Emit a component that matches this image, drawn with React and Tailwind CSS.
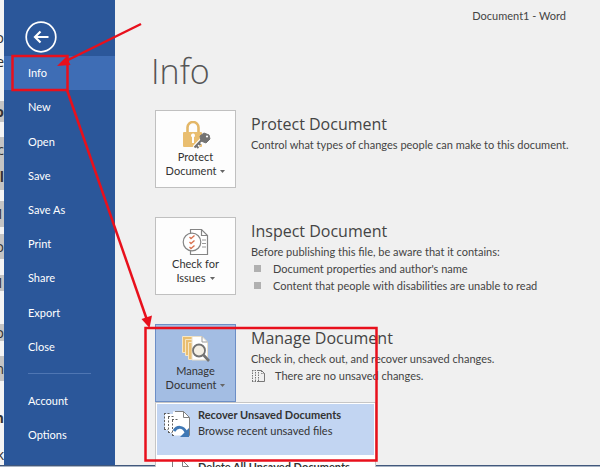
const ui = "font-['Open_Sans','Noto_Sans',sans-serif]";
const body = "font-['Lato','Open_Sans',sans-serif]";

const navItems = ["Info", "New", "Open", "Save", "Save As", "Print", "Share", "Export", "Close"];

const pageLines = [
  { h: "h-[26px]", text: "" },
  { h: "h-[24px]", text: "o" },
  { h: "h-[24px]", text: "e" },
  { h: "h-[27px]", text: "" },
  { h: "h-[21px]", text: "o", bold: true, marked: true },
  { h: "h-[15px]", text: "" },
  { h: "h-[26px]", text: "c", marked: true },
  { h: "h-[27px]", text: "l", bold: true, marked: true },
  { h: "h-[11px]", text: "" },
  { h: "h-[26px]", text: "1", marked: true },
  { h: "h-[7px]", text: "" },
  { h: "h-[25px]", text: "o", marked: true },
  { h: "h-[16px]", text: "" },
  { h: "h-[16px]", text: "1", marked: true },
  { h: "h-[33px]", text: "" },
  { h: "h-[17px]", text: "o", marked: true },
  { h: "h-[15px]", text: "" },
  { h: "h-[25px]", text: "n", marked: true },
  { h: "h-[25px]", text: "" },
  { h: "h-[24px]", text: "n", bold: true },
  { h: "h-[14px]", text: "" },
  { h: "h-[22px]", text: "k" },
];

function PageBehind() {
  return (
    <div className="flex w-1 shrink-0 flex-col overflow-hidden bg-[#f4f4f4] text-[#333]">
      {pageLines.map((l, i) => (
        <div
          key={i}
          className={`flex shrink-0 items-center justify-end text-sm leading-none ${l.h} ${l.marked ? "bg-[#c4c4c4]" : ""} ${l.bold ? "font-bold" : ""}`}
        >
          {l.text}
        </div>
      ))}
    </div>
  );
}

function NavItem({ label, active }) {
  return (
    <button
      type="button"
      className={`flex w-full items-center pl-6 text-left text-[11px] leading-4 text-white ${body} ${active ? "bg-[#3e6db5]" : ""}`}
    >
      {label}
    </button>
  );
}

function Sidebar() {
  return (
    <nav className="flex w-[111px] shrink-0 flex-col bg-[#2b579a]">
      <div className="flex h-14 items-end pb-[3px] pl-[21px]">
        <button type="button" aria-label="Back">
          <svg className="size-8" viewBox="0 0 32 32" fill="none" stroke="#fff">
            <circle cx="16" cy="16" r="14.8" strokeWidth="1.7" />
            <path d="M23.500 16H10M15.500 10.500L10 16l5.500 5.500" strokeWidth="2.200" />
          </svg>
        </button>
      </div>
      <div className="grid h-[308px] shrink-0 grid-rows-9">
        {navItems.map((n) => (
          <NavItem key={n} label={n} active={n === "Info"} />
        ))}
      </div>
      <hr className="mt-[9px] mr-6 mb-[10px] ml-6 border-[#4f76b3]" />
      <div className="grid h-[68px] shrink-0 grid-rows-2">
        <NavItem label="Account" />
        <NavItem label="Options" />
      </div>
    </nav>
  );
}

function LockIcon() {
  return (
    <svg className="h-7 w-8" viewBox="0 0 32 28" fill="none">
      <path d="M7.500 12V6.500a5.500 5.500 0 0 1 11 0V12" stroke="#e3b768" strokeWidth="2.600" />
      <rect x="3" y="11" width="19" height="15" rx="1" fill="#e9be70" />
      <path d="M11 14.500a2 2 0 1 1 3 1.700V22h-2v-5.800a2 2 0 0 1-1-1.700z" fill="#fff" />
      <path d="M22.500 18.500L14.500 27" stroke="#fff" strokeWidth="5" />
      <path d="M23 17.500L14.500 26.500M16 24.500l2.500 2.500M18.500 22l2 2" stroke="#737373" strokeWidth="2" />
      <path d="M20 15l4-3 5 2 1 4-4 4-5-2z" fill="#737373" stroke="#737373" strokeLinejoin="round" />
      <circle cx="27" cy="15.500" r="1.100" fill="#fff" />
    </svg>
  );
}

function CheckIcon() {
  return (
    <svg className="h-7 w-8" viewBox="0 0 32 28" fill="none">
      <path d="M10.500 1.500h11l6 6v19h-17z" fill="#fff" stroke="#858585" strokeWidth="1.200" />
      <path d="M21.500 1.500v6h6" stroke="#858585" strokeWidth="1.200" />
      <path d="M22 12h4M22 15.500h4M22 19h4" stroke="#9a9a9a" />
      <circle cx="12" cy="14" r="8.800" fill="#fff" stroke="#858585" strokeWidth="1.200" />
      <path d="M9.500 9l1.500 1.500 3.500-3M9.500 14l1.500 1.500 3.500-3M9.500 19l1.500 1.500 3.500-3" stroke="#d8714f" strokeWidth="1.300" />
    </svg>
  );
}

function ManageIcon() {
  return (
    <svg className="h-7 w-8" viewBox="0 0 32 28" fill="none">
      <path d="M2.500 1.500h12v16h-12z" fill="#e9be70" stroke="#f7e6c4" />
      <path d="M5.500 4.500h10v16h-10z" fill="#e9be70" stroke="#f7e6c4" />
      <path d="M8.500 7.500h10v17h-10z" fill="#e9be70" stroke="#f7e6c4" />
      <path d="M12 1.500h10l5.500 5.500v18H12z" fill="#fff" stroke="#eadfc8" />
      <path d="M22 1.500v5.500h5.500" stroke="#9a9a9a" />
      <circle cx="19" cy="15.500" r="6" fill="#f4efe4" stroke="#737373" strokeWidth="1.800" />
      <path d="M23.500 20l5.500 6" stroke="#737373" strokeWidth="2.600" />
    </svg>
  );
}

function DraftsIcon() {
  return (
    <svg className="h-[14px] w-4" viewBox="0 0 16 14" fill="none" stroke="#777">
      <path d="M1.500 1v12M1 12.500h4M1 1.500h4M4.500 3v9" strokeDasharray="1.500 1" />
      <path d="M6 1.500h4.500l3 3v8H6" />
      <path d="M7.500 3v9M10.500 1.500v3h3" strokeDasharray="1.500 1" />
    </svg>
  );
}

function RecoverIcon() {
  return (
    <svg className="size-7 shrink-0" viewBox="0 0 28 28" fill="none">
      <path d="M2 4h8V1.500h10.500l6 6v18H9V23H5v-3H2z" fill="#fff" />
      <path d="M12 1.500h8.500l6 6v18H24M20.500 1.500v6h6" stroke="#808080" />
      <path d="M1.500 3v17M1 3.500h7M1 19.500h4M5.500 7v16M5 6.500h7M5 22.500h4M9.500 10v16M9 9.500h7M9 25.500h3" stroke="#606060" strokeDasharray="2 1.500" />
      <path d="M11 21c3-5 9-5 12 1" stroke="#3f78b5" strokeWidth="3" />
      <path d="M26 18v9h-9z" fill="#3f78b5" />
    </svg>
  );
}

function DeleteIcon() {
  return (
    <svg className="size-7 shrink-0" viewBox="0 0 28 28" fill="none" stroke="#808080">
      <path d="M9.500 26V1.500h10l6 6V26" fill="#fff" />
      <path d="M19.500 1.500v6h6" />
    </svg>
  );
}

function Tile({ icon, first, second, open }) {
  return (
    <button
      type="button"
      aria-expanded={open}
      className={`flex h-[78px] w-[81px] shrink-0 flex-col items-center border pt-[10px] text-[11px] leading-[14px] text-[#333] ${body} ${open ? "border-[#6c8ec6] bg-[#a3bde3]" : "border-[#c0c0c0] bg-[#fdfdfd]"}`}
    >
      {icon}
      <span className="mt-px">{first}</span>
      <span className="flex items-center gap-1">
        {second}
        <svg className="h-[3px] w-[5px]" viewBox="0 0 5 3" fill="#666">
          <path d="M0 0h5L2.500 3z" />
        </svg>
      </span>
    </button>
  );
}

function Section({ tile, title, text, children, menu }) {
  return (
    <section className="relative flex h-[78px] gap-[15px]">
      {tile}
      <div className={`min-w-0 text-[11px] leading-[17px] whitespace-nowrap text-[#444] ${body}`}>
        <h2 className={`pt-[3px] pb-px text-base leading-[22px] text-[#444] ${ui}`}>{title}</h2>
        <p>{text}</p>
        {children}
      </div>
      {menu}
    </section>
  );
}

function ManageMenu() {
  return (
    <div role="menu" className={`absolute top-full left-0 w-[221px] border border-[#c6c6c6] bg-white text-[11px] leading-4 text-[#333] ${body}`}>
      <button type="button" role="menuitem" className="flex h-[53px] w-full gap-[7px] border border-white bg-[#c2d5f2] pt-[3px] pl-[6px] text-left">
        <span className="pt-[3px]">
          <RecoverIcon />
        </span>
        <span className="flex flex-col whitespace-nowrap">
          <b>Recover Unsaved Documents</b>
          <span>Browse recent unsaved files</span>
        </span>
      </button>
      <button type="button" role="menuitem" className="flex h-[53px] w-full gap-[7px] pt-[3px] pl-[7px] text-left">
        <DeleteIcon />
        <b className="whitespace-nowrap">Delete All Unsaved Documents</b>
      </button>
    </div>
  );
}

function Bullet({ children }) {
  return (
    <li className="flex items-center gap-3 pl-[3px]">
      <span className="size-[7px] bg-[#b0b0b0]" />
      {children}
    </li>
  );
}

function Annotations() {
  return (
    <svg className="pointer-events-none absolute top-0 left-0 h-[467px] w-[600px]" viewBox="0 0 600 467" fill="none" stroke="#e8101c" strokeWidth="2.500">
      <rect x="12.500" y="56" width="55" height="34" />
      <path d="M141 24L66 61" />
      <path d="M57 66l9.500-9.500 4 8.500z" fill="#e8101c" stroke="none" />
      <path d="M67 90L147 320" />
      <path d="M149.500 328l-8-9 10.500-3.500z" fill="#e8101c" stroke="none" />
      <rect x="145.500" y="328" width="231" height="132.500" />
    </svg>
  );
}

export default function App() {
  return (
    <div className={`relative flex h-screen flex-col overflow-hidden bg-[#a9b4c4] ${ui}`}>
      <div className="flex min-h-0 flex-1">
        <PageBehind />
        <Sidebar />
        <main className="min-w-0 flex-1 bg-[#f0f0f0] pl-10">
          <header className={`flex h-8 items-center justify-end pr-[34px] text-[11px] text-[#444] ${body}`}>Document1 - Word</header>
          <h1 className="-ml-1 pt-[14px] text-[34px] leading-[50px] font-light text-[#555]">Info</h1>
          <div className="mt-[14px] flex flex-col gap-[29px]">
            <Section
              tile={<Tile icon={<LockIcon />} first="Protect" second="Document" />}
              title="Protect Document"
              text="Control what types of changes people can make to this document."
            />
            <Section
              tile={<Tile icon={<CheckIcon />} first="Check for" second="Issues" />}
              title="Inspect Document"
              text="Before publishing this file, be aware that it contains:"
            >
              <ul>
                <Bullet>Document properties and author's name</Bullet>
                <Bullet>Content that people with disabilities are unable to read</Bullet>
              </ul>
            </Section>
            <Section
              tile={<Tile icon={<ManageIcon />} first="Manage" second="Document" open />}
              title="Manage Document"
              text="Check in, check out, and recover unsaved changes."
              menu={<ManageMenu />}
            >
              <p className="flex items-center gap-2">
                <DraftsIcon />
                There are no unsaved changes.
              </p>
            </Section>
          </div>
        </main>
      </div>
      <div className="h-[2px] shrink-0 border-t border-[#41587c]" />
      <Annotations />
    </div>
  );
}
